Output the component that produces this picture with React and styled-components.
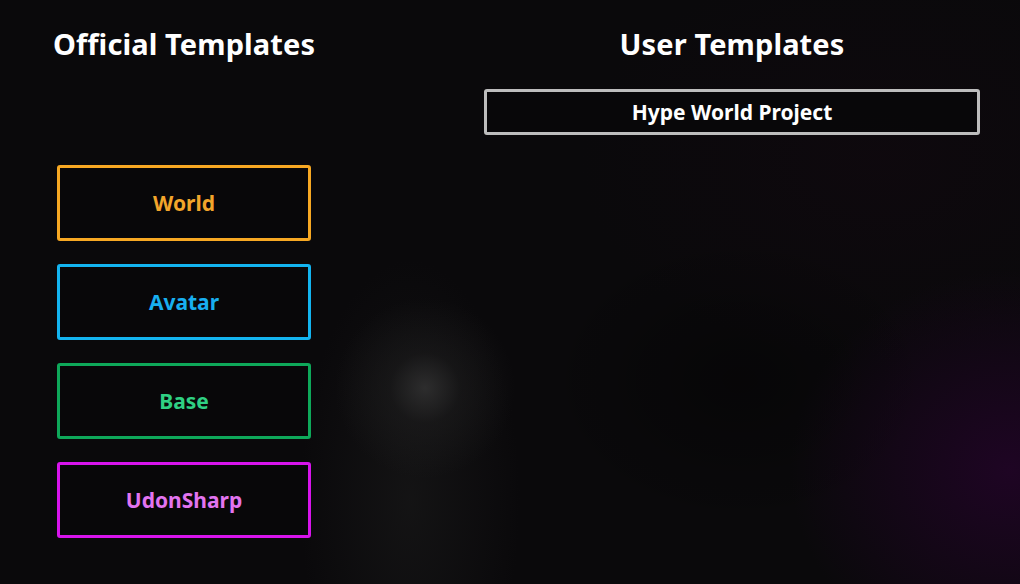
import React from "react";
import styled, { createGlobalStyle } from "styled-components";

const GlobalStyle = createGlobalStyle`
  html, body {
    margin: 0;
    padding: 0;
    background: #09080a;
  }
  body {
    font-family: "Noto Sans", "Open Sans", sans-serif;
  }
`;

const Page = styled.div`
  width: 1020px;
  height: 584px;
  box-sizing: border-box;
  display: grid;
  grid-template-columns: 254px 496px;
  column-gap: 173px;
  padding: 24px 40px 0 57px;
  overflow: hidden;
  background:
    radial-gradient(circle at 425px 388px, rgba(58, 58, 58, 0.7) 0, rgba(38, 38, 38, 0.35) 35px, rgba(20, 20, 20, 0) 90px),
    radial-gradient(ellipse 110px 240px at 410px 500px, rgba(28, 28, 28, 0.55), rgba(20, 20, 20, 0)),
    radial-gradient(ellipse 220px 200px at 1010px 470px, rgba(34, 4, 40, 0.85), rgba(20, 5, 25, 0)),
    radial-gradient(ellipse 300px 200px at 880px 160px, rgba(18, 8, 16, 0.5), rgba(0, 0, 0, 0)),
    radial-gradient(ellipse 200px 150px at 740px 380px, rgba(0, 0, 0, 0.35), rgba(0, 0, 0, 0)),
    #0a090b;
`;

const Column = styled.section`
  display: flex;
  flex-direction: column;
  align-items: stretch;
`;

const Heading = styled.h2`
  margin: 0 -40px;
  color: #ffffff;
  font-size: 29px;
  font-weight: 700;
  line-height: 40px;
  text-align: center;
  white-space: nowrap;
  letter-spacing: 0.1px;
`;

const List = styled.div`
  display: flex;
  flex-direction: column;
  gap: ${(p) => p.$gap}px;
  margin-top: ${(p) => p.$top}px;
`;

const TemplateButton = styled.button`
  box-sizing: border-box;
  height: ${(p) => p.$height}px;
  border: 3px solid ${(p) => p.$border};
  border-radius: 3px;
  background: rgba(8, 7, 9, 0.85);
  color: ${(p) => p.$text};
  font-family: "Noto Sans", "Open Sans", sans-serif;
  font-size: 21px;
  font-weight: 700;
  cursor: pointer;
  padding: 0;
`;

const official = [
  { name: "World", border: "#f7a823", text: "#f2a52b" },
  { name: "Avatar", border: "#13b4f0", text: "#18aff0" },
  { name: "Base", border: "#0ea85a", text: "#2fd083" },
  { name: "UdonSharp", border: "#d714ec", text: "#e274f0" },
];

export default function App() {
  return (
    <>
      <GlobalStyle />
      <Page>
        <Column>
          <Heading>Official Templates</Heading>
          <List $gap={23} $top={101}>
            {official.map((t) => (
              <TemplateButton
                key={t.name}
                $height={76}
                $border={t.border}
                $text={t.text}
              >
                {t.name}
              </TemplateButton>
            ))}
          </List>
        </Column>
        <Column>
          <Heading>User Templates</Heading>
          <List $gap={10} $top={25}>
            <TemplateButton $height={46} $border="#bdbdbd" $text="#ffffff">
              Hype World Project
            </TemplateButton>
          </List>
        </Column>
      </Page>
    </>
  );
}
